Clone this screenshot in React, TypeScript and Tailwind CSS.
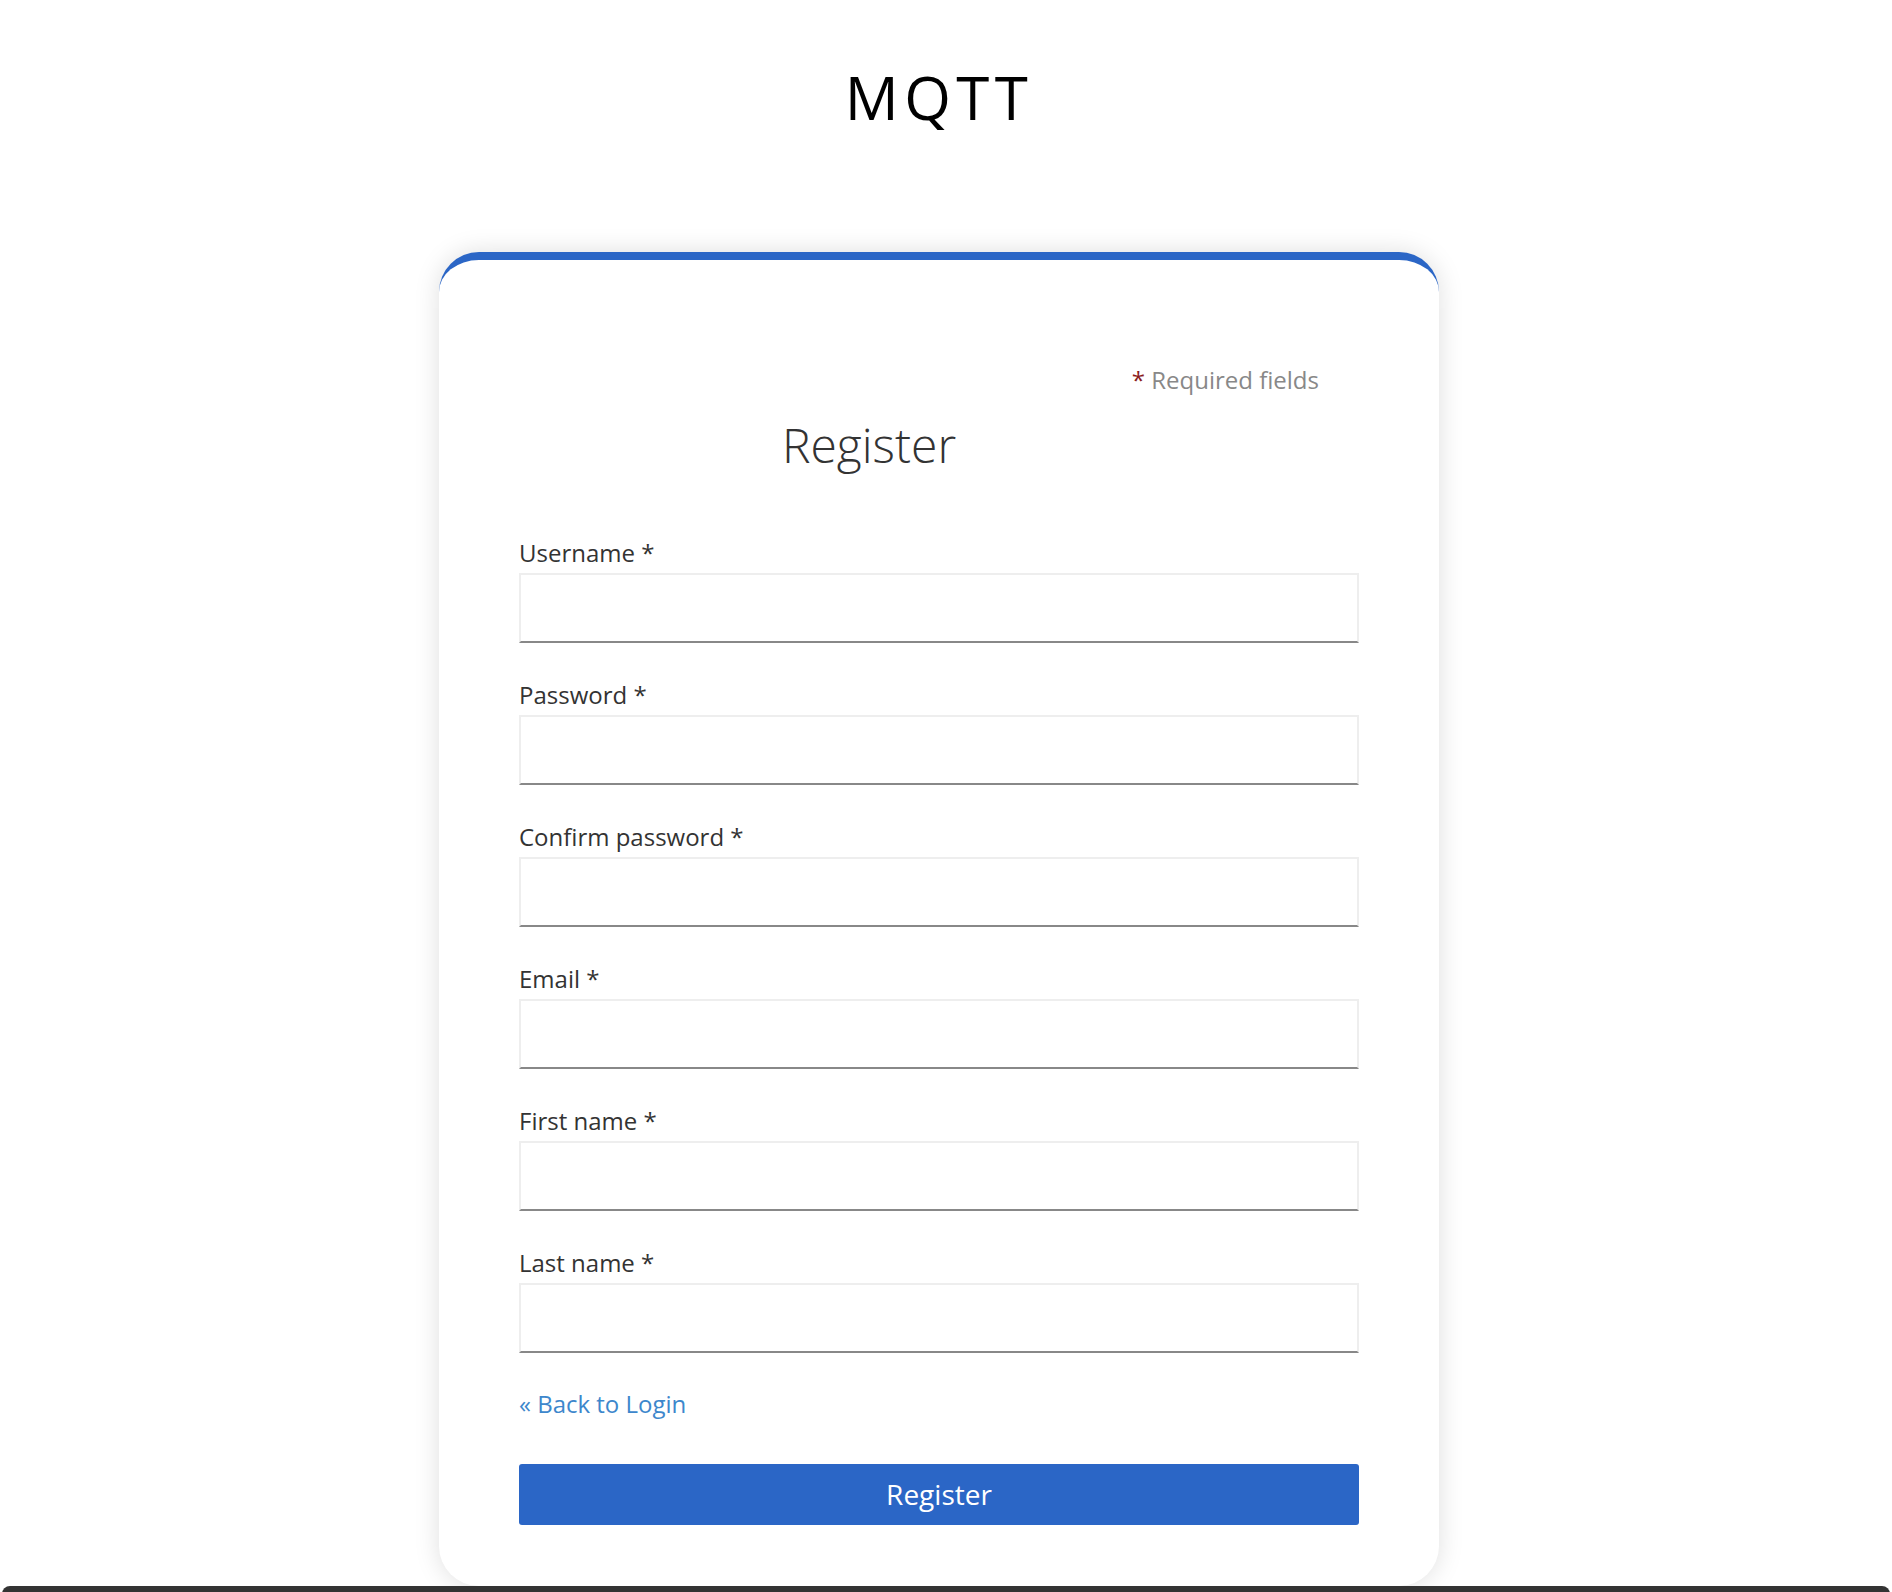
import React from "react";

const fields = [
  "Username",
  "Password",
  "Confirm password",
  "Email",
  "First name",
  "Last name",
];

export default function App() {
  return (
    <div className="min-h-screen bg-white font-['Open_Sans',sans-serif]">
      <div className="w-[1878px]">
        <h1 className="pt-[61px] text-center text-[60px] leading-[72px] tracking-[0.09em] font-normal text-black">
          MQTT
        </h1>
        <div className="mx-auto mt-[119px] w-[1000px] rounded-[40px] border-t-[8px] border-solid border-t-[#2b66c6] bg-white px-[80px] pt-[102px] pb-[61px] shadow-[0_0_26px_rgba(0,0,0,0.13)]">
          <div className="pr-[40px] text-right text-[24px] leading-[36px] text-[#888]">
            <span className="text-[#8b1c1c]">*</span> Required fields
          </div>
          <h2 className="mt-[18px] w-[700px] text-center text-[48px] font-light leading-[57.6px] text-[#333]">
            Register
          </h2>
          <form className="mt-[61px]" onSubmit={(e) => e.preventDefault()}>
            {fields.map((f, i) => (
              <div key={f} className={i < fields.length - 1 ? "mb-[34px]" : ""}>
                <label className="mb-[2px] block text-[24px] leading-[36px] text-[#333]">
                  {f} *
                </label>
                <input
                  type={f.toLowerCase().includes("password") ? "password" : "text"}
                  className="block h-[70px] w-full border-2 border-solid border-[#eeeeee] border-b-[#888888] bg-white px-3 text-[24px] outline-none"
                />
              </div>
            ))}
            <a
              href="#"
              className="mt-[33px] block text-[24px] leading-[36px] text-[#3d87cc] no-underline"
            >
              « Back to Login
            </a>
            <button
              type="submit"
              className="mt-[42px] block h-[61px] w-full rounded-[3px] bg-[#2b66c6] text-[28px] leading-[61px] text-white"
            >
              Register
            </button>
          </form>
        </div>
      </div>
      <div className="mx-[2px] h-[60px] rounded-t-[8px] bg-[#333333]" />
    </div>
  );
}
